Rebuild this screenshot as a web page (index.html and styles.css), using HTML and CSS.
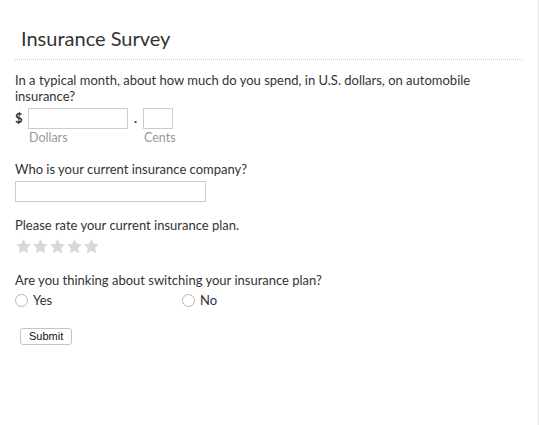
FILE: index.html
```html
<!DOCTYPE html>
<html>
<head>
<meta charset="utf-8">
<link rel="stylesheet" href="styles.css">
</head>
<body>
<div class="page">
  <h1 class="title">Insurance Survey</h1>
  <div class="rule"></div>

  <div class="question q1">
    <div class="qtext">In a typical month, about how much do you spend, in U.S. dollars, on automobile insurance?</div>
    <div class="money">
      <span class="dollar">$</span>
      <div class="field">
        <span class="box box-dollars"></span>
        <span class="sub">Dollars</span>
      </div>
      <span class="dot">.</span>
      <div class="field">
        <span class="box box-cents"></span>
        <span class="sub">Cents</span>
      </div>
    </div>
  </div>

  <div class="question q2">
    <div class="qtext">Who is your current insurance company?</div>
    <span class="box box-company"></span>
  </div>

  <div class="question q3">
    <div class="qtext">Please rate your current insurance plan.</div>
    <div class="stars">
      <svg class="star" viewBox="0 0 24 24"><path d="M12 1.5l3.2 6.7 7.3 1-5.3 5 1.3 7.3L12 18l-6.5 3.5 1.3-7.3-5.3-5 7.3-1z"/></svg>
      <svg class="star" viewBox="0 0 24 24"><path d="M12 1.5l3.2 6.7 7.3 1-5.3 5 1.3 7.3L12 18l-6.5 3.5 1.3-7.3-5.3-5 7.3-1z"/></svg>
      <svg class="star" viewBox="0 0 24 24"><path d="M12 1.5l3.2 6.7 7.3 1-5.3 5 1.3 7.3L12 18l-6.5 3.5 1.3-7.3-5.3-5 7.3-1z"/></svg>
      <svg class="star" viewBox="0 0 24 24"><path d="M12 1.5l3.2 6.7 7.3 1-5.3 5 1.3 7.3L12 18l-6.5 3.5 1.3-7.3-5.3-5 7.3-1z"/></svg>
      <svg class="star" viewBox="0 0 24 24"><path d="M12 1.5l3.2 6.7 7.3 1-5.3 5 1.3 7.3L12 18l-6.5 3.5 1.3-7.3-5.3-5 7.3-1z"/></svg>
    </div>
  </div>

  <div class="question q4">
    <div class="qtext">Are you thinking about switching your insurance plan?</div>
    <div class="radios">
      <label class="radio"><span class="circle"></span>Yes</label>
      <label class="radio"><span class="circle"></span>No</label>
    </div>
  </div>

  <div class="actions">
    <span class="submit">Submit</span>
  </div>
</div>
</body>
</html>
```

FILE: styles.css
```css
html, body {
  margin: 0;
  padding: 0;
  background: #fff;
}
body {
  font-family: Lato, "Open Sans", sans-serif;
  color: #333;
  height: 425px;
  overflow: hidden;
}
.page {
  width: 539px;
  height: 425px;
  border-right: 1px solid #e6e6e6;
  padding: 26px 0 0 15px;
  box-sizing: border-box;
}
.title {
  margin: 0 0 0 6px;
  font-size: 20px;
  font-weight: 400;
  line-height: 24px;
  color: #333;
}
.rule {
  margin-top: 9px;
  width: 507px;
  border-top: 1px dotted #c8c8c8;
}
.question {
  font-size: 13px;
  line-height: 16px;
}
.qtext {
  width: 480px;
}
.q1 { margin-top: 12px; }
.money {
  display: flex;
  align-items: flex-start;
  margin-top: 4px;
}
.dollar {
  font-size: 13px;
  font-weight: 700;
  line-height: 21px;
  width: 13px;
}
.field {
  display: flex;
  flex-direction: column;
}
.box {
  display: block;
  height: 21px;
  border: 1px solid #ccc;
  box-sizing: border-box;
  background: #fff;
}
.box-dollars { width: 100px; }
.box-cents { width: 30px; }
.box-company { width: 191px; margin-top: 4px; }
.dot {
  width: 15px;
  text-align: center;
  font-weight: 700;
  line-height: 21px;
}
.sub {
  font-size: 12.5px;
  line-height: 18px;
  color: #999;
  margin-left: 1px;
}
.q2 { margin-top: 14px; }
.q3 { margin-top: 15px; }
.stars {
  display: flex;
  margin-top: 5px;
}
.star {
  width: 17px;
  height: 17px;
  fill: #d8d8d8;
}
.q4 { margin-top: 17px; }
.radios {
  display: flex;
  margin-top: 4px;
}
.radio {
  display: flex;
  align-items: center;
  width: 167px;
  font-size: 13px;
}
.circle {
  width: 11px;
  height: 11px;
  border: 1px solid #b5b5b5;
  border-radius: 50%;
  margin-right: 5px;
  background: #fff;
}
.actions {
  margin-top: 16px;
  padding-left: 5px;
}
.submit {
  display: inline-block;
  font-family: "Liberation Sans", Arial, sans-serif;
  font-size: 11px;
  line-height: 15px;
  padding: 0 8px;
  border: 1px solid #c4c4c4;
  border-radius: 3px;
  color: #111;
  background: #fff;
}
```
